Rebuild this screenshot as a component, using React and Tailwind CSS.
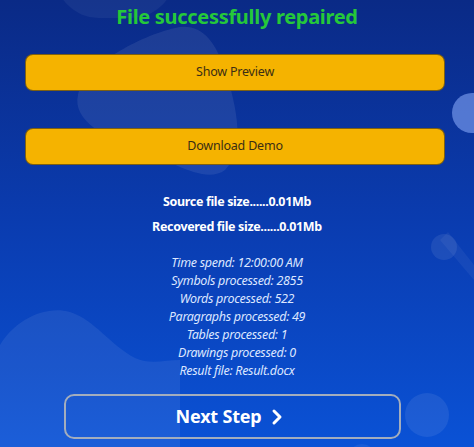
import React from 'react';
import { ChevronRight } from 'lucide-react';

const stats = [
    'Time spend: 12:00:00 AM',
    'Symbols processed: 2855',
    'Words processed: 522',
    'Paragraphs processed: 49',
    'Tables processed: 1',
    'Drawings processed: 0',
    'Result file: Result.docx',
];

const App = () => {
    return (
        <div
            className="relative w-[474px] h-[447px] overflow-hidden bg-gradient-to-b from-[#0a2a86] via-[#0a3cb0] to-[#0a52d6]"
            style={{ fontFamily: '"Noto Sans", "Open Sans", sans-serif' }}
        >
            {/* Background decoration */}
            <div className="absolute left-[55px] top-[-70px] w-[120px] h-[88px] rounded-full bg-white/[0.05]"></div>
            <svg className="absolute left-0 top-0" width="474" height="447" viewBox="0 0 474 447">
                <path d="M175 28 C200 22 215 40 225 70 C238 110 245 150 225 170 C205 185 170 160 140 150 C105 138 72 120 78 95 C85 65 140 36 175 28 Z" fill="#ffffff" fillOpacity="0.08" />
                <path d="M0 345 C15 320 45 305 70 312 C95 320 110 345 135 358 C150 365 165 360 180 360 L180 447 L0 447 Z" fill="#ffffff" fillOpacity="0.07" />
                <path d="M440 240 L474 280 L474 265 L448 232 Z" fill="#ffffff" fillOpacity="0.05" />
                <circle cx="444" cy="247" r="13" fill="#ffffff" fillOpacity="0.08" />
                <circle cx="472" cy="113" r="20" fill="#8fb0ff" fillOpacity="0.55" />
                <circle cx="427" cy="415" r="22" fill="#ffffff" fillOpacity="0.08" />
                <circle cx="362" cy="458" r="14" fill="#ffffff" fillOpacity="0.06" />
            </svg>

            <div className="relative flex flex-col items-center pt-[5px]">
                <h1 className="text-[20px] leading-[24px] font-bold tracking-[-0.3px] text-[#25c83a]">File successfully repaired</h1>

                <button className="self-start ml-[25px] mt-[25px] w-[420px] h-[37px] rounded-[8px] bg-[#f5b300] border border-[#4a3d1a]/70 text-[12.5px] tracking-[-0.2px] text-[#3b2e14]">
                    Show Preview
                </button>
                <button className="self-start ml-[25px] mt-[37px] w-[420px] h-[37px] rounded-[8px] bg-[#f5b300] border border-[#4a3d1a]/70 text-[12.5px] tracking-[-0.2px] text-[#3b2e14]">
                    Download Demo
                </button>

                <div className="mt-[28px] flex flex-col items-center gap-[7px] text-white font-bold text-[12.5px] tracking-[-0.35px] leading-[18px]">
                    <p>Source file size......0.01Mb</p>
                    <p>Recovered file size......0.01Mb</p>
                </div>

                <div className="mt-[18px] flex flex-col items-center text-[#dce6ff] italic text-[12.5px] tracking-[-0.3px] leading-[18px]">
                    {stats.map((s) => (
                        <p key={s}>{s}</p>
                    ))}
                </div>

                <button className="self-start ml-[64px] mt-[14px] w-[337px] h-[45px] rounded-[10px] border-2 border-[#a3adbd] flex items-center justify-center gap-1 text-white font-bold text-[18px] tracking-[-0.2px]">
                    Next Step
                    <ChevronRight size={24} strokeWidth={3} />
                </button>
            </div>
        </div>
    );
};

export default App;
